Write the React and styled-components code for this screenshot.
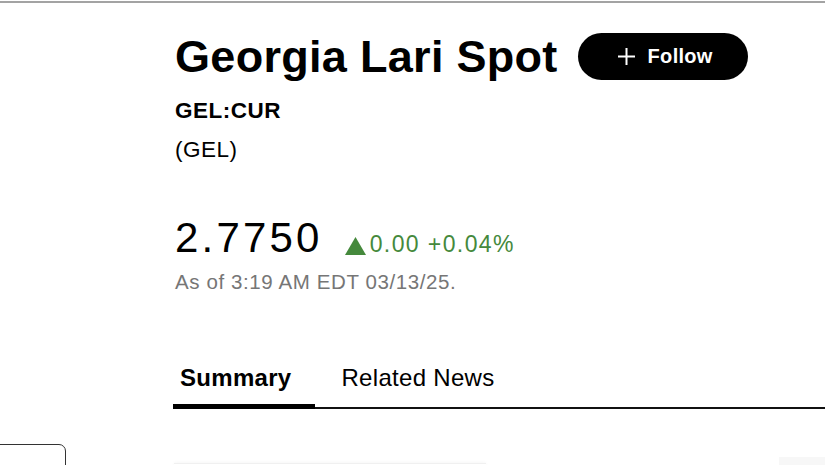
import styled, { createGlobalStyle } from "styled-components";

const GlobalStyle = createGlobalStyle`
  html, body {
    margin: 0;
    padding: 0;
    background: #fff;
    overflow: hidden;
  }
  body {
    font-family: "Liberation Sans", Arial, sans-serif;
    color: #000;
  }
`;

const Page = styled.div`
  width: 825px;
  height: 465px;
  overflow: hidden;
  border-top: 2px solid #a3a3a3;
  margin-top: 1px;
  box-sizing: border-box;
  display: flex;
  flex-direction: column;
`;

const Header = styled.header`
  padding: 26px 0 0 175px;
  display: flex;
  flex-direction: column;
`;

const TitleRow = styled.div`
  display: flex;
  align-items: center;
  gap: 20px;
`;

const Title = styled.h1`
  margin: 0;
  font-size: 45px;
  line-height: 56px;
  font-weight: 700;
  letter-spacing: 0.3px;
`;

const FollowButton = styled.button`
  display: flex;
  align-items: center;
  justify-content: center;
  gap: 12px;
  width: 170px;
  height: 47px;
  border: none;
  border-radius: 24px;
  background: #000;
  color: #fff;
  font-family: "Liberation Sans", Arial, sans-serif;
  font-size: 20px;
  font-weight: 700;
  letter-spacing: 0.3px;
  padding: 0 0 0 4px;
  margin-top: -2px;
`;

const Ticker = styled.div`
  margin-top: 13px;
  font-size: 22.5px;
  line-height: 26px;
  font-weight: ${p => (p.$bold ? 700 : 400)};
  letter-spacing: 0.5px;
`;

const SubTicker = styled(Ticker)`
  margin-top: 13px;
`;

const QuoteRow = styled.div`
  margin-top: 53px;
  display: flex;
  align-items: baseline;
  gap: 22px;
`;

const Price = styled.span`
  font-size: 42px;
  line-height: 44px;
  letter-spacing: 3.2px;
`;

const Change = styled.span`
  color: #45893c;
  font-size: 23px;
  letter-spacing: 1.4px;
  display: inline-flex;
  align-items: baseline;
  gap: 4px;

  svg {
    align-self: flex-end;
    margin-bottom: 3px;
  }
`;

const Timestamp = styled.div`
  margin-top: 10px;
  color: #767676;
  font-size: 20.5px;
  line-height: 24px;
  letter-spacing: 0.6px;
`;

const Tabs = styled.nav`
  margin: 70px 0 0 173px;
  display: flex;
  border-bottom: 2px solid #111;
`;

const Tab = styled.div`
  font-size: 24px;
  line-height: 28px;
  font-weight: ${p => (p.$active ? 700 : 400)};
  letter-spacing: 0.3px;
  padding: ${p => (p.$active ? "0 24px 15px 7px" : "0 0 15px 26px")};
  box-shadow: ${p => (p.$active ? "inset 0 -3px 0 #000" : "none")};
  margin-bottom: -2px;
  border-bottom: ${p => (p.$active ? "2px solid #000" : "none")};
`;

const Lower = styled.div`
  margin-top: 35px;
  display: flex;
  align-items: flex-start;
  flex: 1;
`;

const SideBox = styled.div`
  width: 68px;
  height: 40px;
  margin-left: -2px;
  box-sizing: border-box;
  border: 1.5px solid #333;
  border-radius: 0 7px 0 0;
`;

const Card = styled.div`
  margin: 19px 0 0 108px;
  width: 312px;
  height: 20px;
  border-top: 1px solid #f0f0f0;
  box-shadow: 0 -1px 3px rgba(0, 0, 0, 0.03);
`;

const Ghost = styled.div`
  margin: 13px 0 0 293px;
  flex: 1;
  height: 20px;
  background: #f7f7f7;
`;

const PlusIcon = () => (
  <svg width="19" height="19" viewBox="0 0 19 19" aria-hidden="true">
    <path d="M9.5 1v17M1 9.5h17" stroke="#fff" strokeWidth="2" fill="none" />
  </svg>
);

const UpTriangle = () => (
  <svg width="21" height="18" viewBox="0 0 21 18" aria-hidden="true">
    <path d="M10.5 0L21 18H0z" fill="#45893c" />
  </svg>
);

export default function App() {
  return (
    <>
      <GlobalStyle />
      <Page>
        <Header>
          <TitleRow>
            <Title>Georgia Lari Spot</Title>
            <FollowButton>
              <PlusIcon />
              Follow
            </FollowButton>
          </TitleRow>
          <Ticker $bold>GEL:CUR</Ticker>
          <SubTicker>(GEL)</SubTicker>
          <QuoteRow>
            <Price>2.7750</Price>
            <Change>
              <UpTriangle />
              0.00 +0.04%
            </Change>
          </QuoteRow>
          <Timestamp>As of 3:19 AM EDT 03/13/25.</Timestamp>
        </Header>
        <Tabs>
          <Tab $active>Summary</Tab>
          <Tab>Related News</Tab>
        </Tabs>
        <Lower>
          <SideBox />
          <Card />
          <Ghost />
        </Lower>
      </Page>
    </>
  );
}
